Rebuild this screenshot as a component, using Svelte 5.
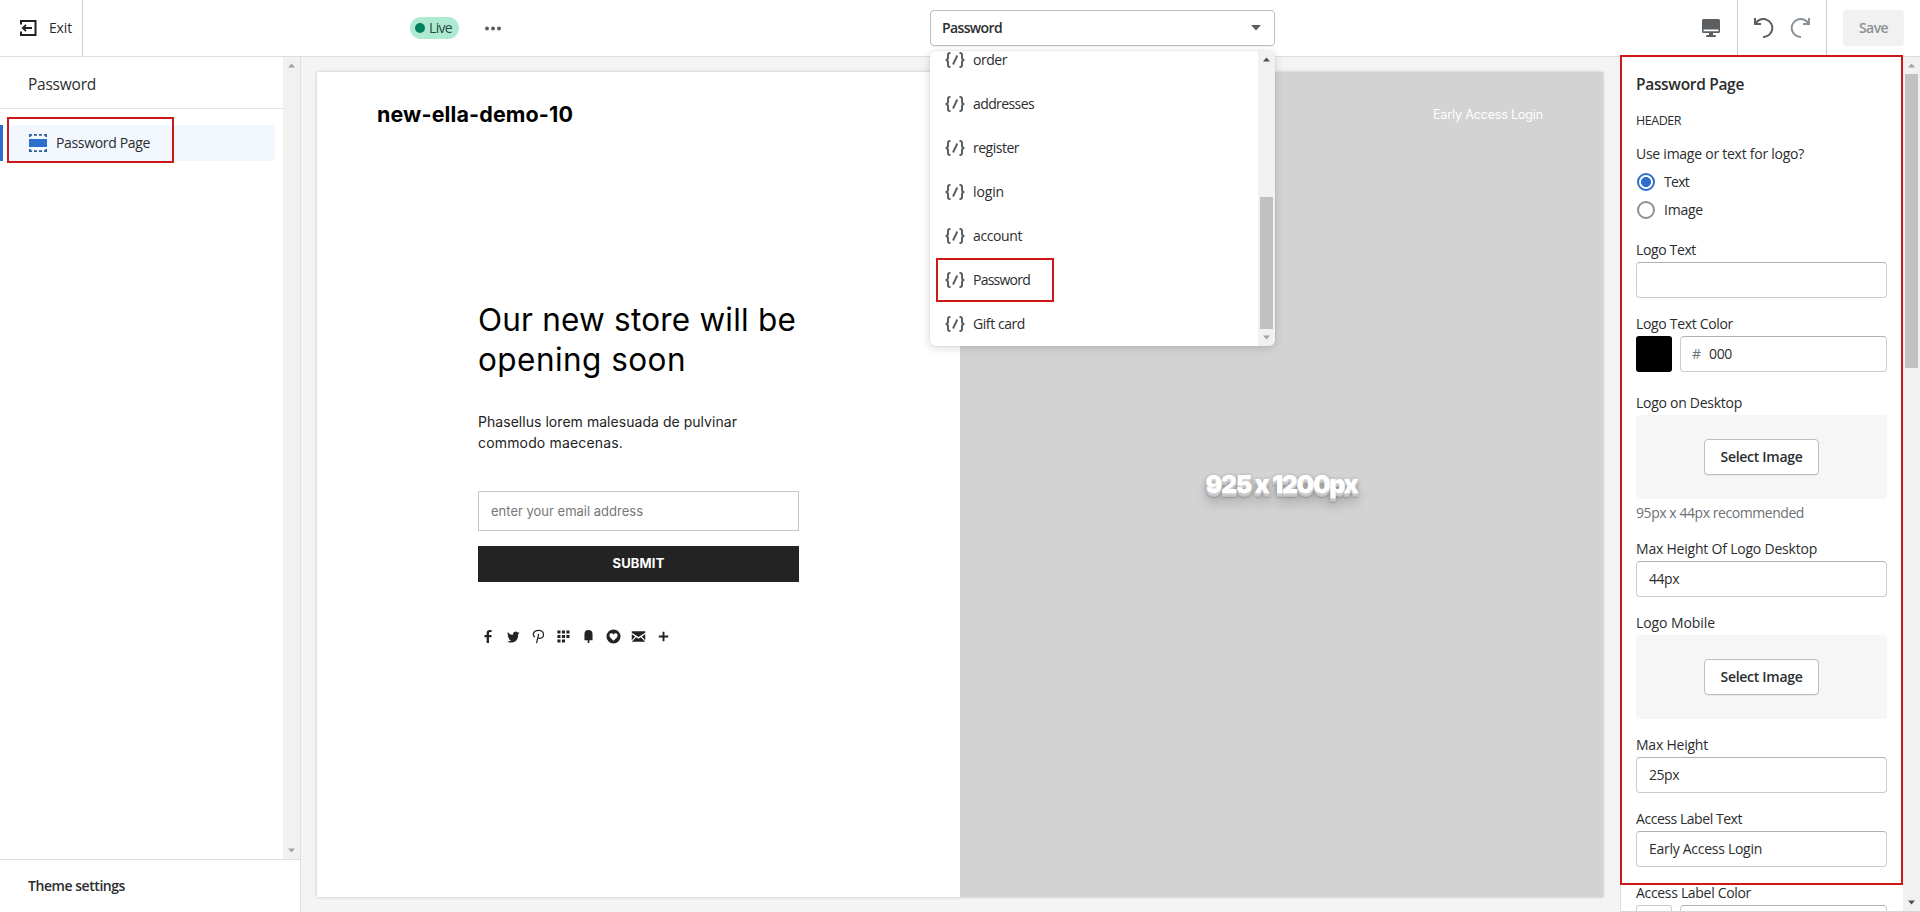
<script>
  const templates = ['order', 'addresses', 'register', 'login', 'account', 'Password', 'Gift card'];
  const widths = [34, 61, 46, 31, 49, 57, 52];

  // Tracks a line of text so that it spans the given width.
  function fit(node, width) {
    const natural = node.getBoundingClientRect().width;
    const count = node.textContent.length;
    node.style.letterSpacing = (width - natural) / count + 'px';
  }
</script>

{#snippet t(text, width)}<span class="t" use:fit={width}>{text}</span>{/snippet}

{#snippet arrow(up, color)}
  <svg class="arrow" width="17" height="17" viewBox="0 0 17 17"><path d={up ? 'M5 10.500h7L8.500 6.500z' : 'M5 6.500h7L8.500 10.500z'} fill={color} /></svg>
{/snippet}

<div class="app">
  <header class="top">
    <div class="exit">
      <svg width="17" height="16" viewBox="0 0 17 16" fill="none" stroke="#202223" stroke-width="2"><path d="M1 4.500V1h14.500v14H1v-3.500" /><path d="M12 8H3M6 4.800L2.800 8 6 11.200" stroke-width="1.800" /></svg>
      {@render t('Exit', 23)}
    </div>
    <div class="status">
      <div class="live"><i></i>{@render t('Live', 23)}</div>
      <svg width="16" height="5" viewBox="0 0 16 5" fill="#5c5f62"><circle cx="2" cy="2.500" r="2" /><circle cx="8" cy="2.500" r="2" /><circle cx="14" cy="2.500" r="2" /></svg>
    </div>
    <div class="picker">
      <div class="select">
        {@render t('Password', 60)}
        <svg width="10" height="6" viewBox="0 0 10 6"><path d="M0 0h10L5 5.500z" fill="#5c5f62" /></svg>
      </div>
      <div class="menu">
        <div class="options">
          {#each templates as name, i}
            <div class="option" class:marked={name === 'Password'}>
              <svg width="20" height="16" viewBox="0 0 20 16" fill="none" stroke="#5c5f62" stroke-width="2"><path d="M5.500 1H4.800Q3 1 3 3v2.500Q3 8 .6 8 3 8 3 10.500V13q0 2 1.800 2h.7M14.500 1h.7Q17 1 17 3v2.500Q17 8 19.400 8 17 8 17 10.500V13q0 2-1.800 2h-.7M12.300 3.500L8 12.500" /></svg>
              {@render t(name, widths[i])}
            </div>
          {/each}
        </div>
        <div class="bar">{@render arrow(true, '#505050')}<b></b>{@render arrow(false, '#a3a3a3')}</div>
      </div>
    </div>
    <div class="tools">
      <div class="device">
        <svg width="18" height="18" viewBox="0 0 18 18" fill="#5c5f62"><path fill-rule="evenodd" d="M1.500 0h15Q18 0 18 1.500v11q0 1.500-1.500 1.500h-15Q0 14 0 12.500v-11Q0 0 1.500 0zM1.500 10.500v1.700h15v-1.700z" /><path d="M7 14h4v2h2q1 0 1 2H4q0-2 1-2h2z" /></svg>
      </div>
      <div class="history">
        <svg width="20" height="20" viewBox="0 0 20 20" fill="none" stroke="#5c5f62" stroke-width="2"><path d="M1 0v6h6M1.500 5.500A9 9 0 1 1 9 19" /></svg>
        <svg width="20" height="20" viewBox="0 0 20 20" fill="none" stroke="#8c9196" stroke-width="2"><path d="M19 0v6h-6M18.500 5.500A9 9 0 1 0 11 19" /></svg>
      </div>
      <div class="save">{@render t('Save', 29)}</div>
    </div>
  </header>

  <div class="body">
    <aside class="left">
      <div class="tree">
        <div class="list">
          <h2>{@render t('Password', 68)}</h2>
          <div class="row">
            <div class="section">
              <svg width="18" height="18" viewBox="0 0 18 18"><path d="M0 5h18v8H0z" fill="#2c6ecb" /><path d="M0 0h3v1.700H1.700V3H0zM5 0h3v1.700H5zM10 0h3v1.700h-3zM15 0h3v3h-1.700V1.700H15zM0 15h1.700v1.300H3V18H0zM5 16.300h3V18H5zM10 16.300h3V18h-3zM16.300 15H18v3h-3v-1.700h1.300z" fill="#2f6096" /></svg>
              {@render t('Password Page', 94)}
            </div>
            <div class="mark"></div>
          </div>
        </div>
        <div class="bar">{@render arrow(true, '#a3a3a3')}{@render arrow(false, '#a3a3a3')}</div>
      </div>
      <footer>{@render t('Theme settings', 97)}</footer>
    </aside>

    <main>
      <div class="card">
        <div class="half white">
          <div class="brand">{@render t('new-ella-demo-10', 196)}</div>
          <div class="form">
            <h1>{@render t('Our new store will be', 318)}<br />{@render t('opening soon', 208)}</h1>
            <p>{@render t('Phasellus lorem malesuada de pulvinar', 259)}<br />{@render t('commodo maecenas.', 145)}</p>
            <div class="email">{@render t('enter your email address', 152)}</div>
            <div class="submit">{@render t('SUBMIT', 52)}</div>
            <div class="social">
              <svg viewBox="0 0 16 16"><path d="M6 15V8.700H3.700V6.400H6V4.500Q6 1 9.300 1h2v2.300H9.700Q8.500 3.300 8.500 4.600v1.800h2.700v2.300H8.500V15z" /></svg>
              <svg viewBox="0 0 16 16"><path d="M14.500 4l-1.500.5 1.100-1.600-1.800.7a3 3 0 0 0-5 2.700Q3.800 6.100 2 3.300 1 6 3 7.400L1.700 7q0 2.300 2.300 3l-1.200.1q.7 1.800 2.700 2-1.600 1.200-4 1.100Q6 15.800 9.700 13.300 13 11 13 5.500z" /></svg>
              <svg viewBox="0 0 16 16"><path d="M4 8.800C1 6 2.700 1.500 8 1.500c7 0 6.800 8.600 1.500 8.600-1.200 0-1.800-.5-2.300-1.200M8.200 5.300L5.900 15" fill="none" stroke="#232323" stroke-width="1.300" /></svg>
              <svg viewBox="0 0 16 16"><path d="M1.500 1.500h3.300v3.300H1.500zM6.300 1.500h3.300v3.300H6.300zM11.100 1.500h3.300v3.300h-3.300zM1.500 6.300h3.300v3.300H1.500zM6.300 6.300h3.300v3.300H6.300zM11.100 6.300h3.300v3.300h-3.300zM1.500 11.100h3.300v3.300H1.500zM6.300 11.100h3.300v3.300H6.300z" /></svg>
              <svg viewBox="0 0 16 16"><path d="M3.700 12V5.500Q3.700 1 8 1t4.300 4.500V12H8.900v3H7.100v-3z" /></svg>
              <svg viewBox="0 0 16 16"><path fill-rule="evenodd" d="M.5 8a7.500 7.500 0 0 0 15 0A7.500 7.500 0 0 0 .5 8zM8 12.600L4.200 8.800Q2.700 5.600 5.200 4.600 7.200 4.200 8 6 8.800 4.200 10.800 4.600 13.300 5.600 11.800 8.800z" /></svg>
              <svg viewBox="0 0 16 16"><path d="M.8 2.500h14.400v1.400L8 8.500.8 3.900zM.8 5.600L4.500 8 .8 12zM15.200 5.600V12L11.500 8zM5.500 8.700L8 10.300l2.500-1.600 4.700 4.800H.8z" /></svg>
              <svg viewBox="0 0 16 16"><path d="M7 3h2v4h4v2H9v4H7V9H3V7h4z" /></svg>
            </div>
          </div>
        </div>
        <div class="half grey">
          <div class="login">{@render t('Early Access Login', 110)}</div>
          <div class="size">{@render t('925 x 1200px', 154)}</div>
        </div>
      </div>
    </main>

    <aside class="right">
      <div class="settings">
        <h3>{@render t('Password Page', 108)}</h3>
        <h4>{@render t('HEADER', 45)}</h4>
        <div class="label">{@render t('Use image or text for logo?', 168)}</div>
        <div class="radios">
          <div class="radio"><i class="on"></i>{@render t('Text', 25)}</div>
          <div class="radio"><i></i>{@render t('Image', 39)}</div>
        </div>
        <div class="label">{@render t('Logo Text', 60)}</div>
        <div class="input"></div>
        <div class="label">{@render t('Logo Text Color', 97)}</div>
        <div class="color"><div class="swatch black"></div><div class="input hex"><em>#</em>{@render t('000', 23)}</div></div>
        <div class="label wide">{@render t('Logo on Desktop', 106)}</div>
        <div class="drop"><div class="btn">{@render t('Select Image', 82)}</div></div>
        <div class="help">{@render t('95px x 44px recommended', 168)}</div>
        <div class="label flush">{@render t('Max Height Of Logo Desktop', 181)}</div>
        <div class="input">{@render t('44px', 30)}</div>
        <div class="label">{@render t('Logo Mobile', 79)}</div>
        <div class="drop"><div class="btn">{@render t('Select Image', 82)}</div></div>
        <div class="label">{@render t('Max Height', 72)}</div>
        <div class="input">{@render t('25px', 30)}</div>
        <div class="label">{@render t('Access Label Text', 106)}</div>
        <div class="input">{@render t('Early Access Login', 113)}</div>
        <div class="label">{@render t('Access Label Color', 115)}</div>
        <div class="color"><div class="swatch"></div><div class="input hex"></div></div>
        <div class="mark"></div>
      </div>
      <div class="bar">{@render arrow(true, '#a3a3a3')}<b></b>{@render arrow(false, '#505050')}</div>
    </aside>
  </div>
</div>

<style>
  :global(body) { margin: 0; overflow: hidden; }
  .app { width: 1920px; height: 912px; display: flex; flex-direction: column; overflow: hidden; background: #f4f4f4; color: #2b2d2e; font: 14px/20px "Open Sans", "Noto Sans", sans-serif; }
  .app :global(*) { box-sizing: border-box; }
  .t { display: inline-block; white-space: pre; }
  svg { display: block; flex: none; }
  h1, h2, h3, h4, p { margin: 0; font-weight: 400; }

  .top { flex: none; height: 57px; display: flex; background: #fff; border-bottom: 1px solid #dcdddf; position: relative; z-index: 2; }
  .exit { width: 83px; border-right: 1px solid #c9cccf; display: flex; align-items: center; gap: 12px; padding-left: 20px; font-weight: 500; }
  .status { width: 847px; display: flex; align-items: center; padding-left: 327px; gap: 26px; }
  .live { width: 49px; height: 22px; border-radius: 11px; background: #aee9d1; display: flex; align-items: center; padding-left: 5px; gap: 4px; color: #2c4b3f; }
  .live i { width: 10px; height: 10px; border-radius: 50%; background: #007f5f; }
  .picker { position: relative; width: 345px; padding-top: 10px; }
  .select { height: 36px; border: 1px solid #babfc3; border-radius: 4px; display: flex; align-items: center; justify-content: space-between; padding: 0 13px 0 11px; font-weight: 600; box-shadow: 0 1px 0 rgba(0,0,0,.05); }
  .menu { position: absolute; left: 0; top: 51px; width: 345px; height: 295px; display: flex; background: #fff; border-radius: 6px; overflow: hidden; }
  .picker::after { content: ""; position: absolute; left: 0; top: 51px; width: 345px; height: 295px; border-radius: 6px; box-shadow: 0 2px 10px rgba(23,24,24,.16), 0 0 2px rgba(0,0,0,.12); pointer-events: none; }
  .options { flex: 1; height: 308px; margin-top: -13px; padding: 0 6px; }
  .option { height: 44px; display: flex; align-items: center; gap: 8px; padding-left: 9px; }
  .option.marked { width: 118px; outline: 2px solid #cc1818; outline-offset: -2px; }
  .bar { flex: none; width: 17px; background: #f1f1f1; display: flex; flex-direction: column; align-items: center; justify-content: space-between; }
  .menu .bar b { width: 13px; height: 132px; margin-top: 129px; background: #c1c1c1; }
  .menu .bar { justify-content: flex-start; }
  .tools { margin-left: auto; display: flex; align-items: stretch; }
  .device { width: 36px; display: flex; align-items: center; border-right: 1px solid #c9cccf; }
  .history { width: 89px; display: flex; align-items: center; gap: 16px; padding-left: 16px; border-right: 1px solid #c9cccf; }
  .save { margin: 10px 16px 0; width: 61px; height: 36px; border-radius: 4px; background: #f1f1f1; color: #8c9196; font-weight: 600; display: flex; align-items: center; justify-content: center; }

  .body { flex: 1; min-height: 0; display: flex; }
  .left { width: 301px; background: #fff; border-right: 1px solid #dfe0e2; display: flex; flex-direction: column; }
  .tree { flex: none; height: 802px; display: flex; }
  .list { flex: 1; }
  .list h2 { height: 52px; border-bottom: 1px solid #e1e3e5; padding: 0 28px; line-height: 55px; font-size: 15.500px; font-weight: 500; }
  .row { position: relative; height: 36px; margin-top: 16px; border-left: 3px solid #2c6ecb; padding: 0 8px 0 6px; border-radius: 0 2px 2px 0; }
  .section { height: 36px; border-radius: 4px; background: #f2f7fe; display: flex; align-items: center; gap: 9px; padding-left: 20px; font-weight: 500; }
  .mark { position: absolute; border: 2px solid #cc1818; pointer-events: none; }
  .row .mark { left: 4px; top: -8px; width: 167px; height: 46px; }
  .left footer { flex: none; height: 53px; border-top: 1px solid #dfe0e2; padding: 16px 28px; font-weight: 600; }

  main { width: 1319px; padding: 15px 16px; }
  .card { width: 1286px; height: 825px; display: flex; background: #fff; box-shadow: 0 0 3px rgba(0,0,0,.22); font-family: Inter, sans-serif; color: #000; }
  .white { width: 643px; }
  .brand { height: 84px; padding-left: 60px; line-height: 84px; font-size: 21.500px; font-weight: 700; }
  .form { width: 483px; padding: 144px 0 0 161px; }
  h1 { font-size: 31.500px; line-height: 40px; white-space: nowrap; }
  p { margin-top: 31px; line-height: 21px; font-size: 14px; white-space: nowrap; color: #232323; }
  .email { margin-top: 38px; width: 321px; height: 40px; border: 1px solid #c7c7c7; padding: 0 12px; line-height: 39px; font-size: 13px; color: #777; }
  .submit { margin-top: 15px; width: 321px; height: 36px; background: #232323; color: #fff; font-size: 13px; font-weight: 700; line-height: 35px; text-align: center; }
  .social { margin-top: 47px; padding-left: 3px; display: flex; gap: 10px; }
  .social svg { width: 15px; height: 15px; fill: #232323; }
  .grey { width: 643px; background: #d3d3d3; color: #fff; text-align: right; }
  .login { height: 84px; padding-right: 60px; line-height: 86px; font-size: 12.500px; }
  .size { text-align: center; padding-top: 313px; line-height: 30px; font-size: 25px; font-weight: 900; text-shadow: 0 1px 0 #d8d8d8, 0 2px 0 #ccc, 0 3px 0 #c6c6c6, 0 4px 0 #bbb, 0 5px 1px rgba(0,0,0,.1), 0 0 5px rgba(0,0,0,.1), 0 3px 5px rgba(0,0,0,.25), 0 10px 12px rgba(0,0,0,.22); }

  .right { position: relative; z-index: 3; width: 300px; display: flex; background: #fff; border-left: 1px solid #dfe0e2; border-bottom: 1px solid #d5d6d8; }
  .settings { position: relative; width: 282px; padding: 15px 16px 0 15px; height: 854px; clip-path: inset(-2px 0 0 -1px); }
  .settings .mark { left: -1px; top: -2px; width: 283px; height: 830px; }
  h3 { line-height: 24px; font-size: 15.500px; font-weight: 600; }
  h4 { margin-top: 15px; line-height: 20px; font-size: 12.500px; font-weight: 500; }
  .label { margin-top: 14px; line-height: 24px; height: 24px; white-space: nowrap; }
  h4 + .label { margin-top: 11px; }
  .label.wide { margin-top: 19px; }
  .label.flush { margin-top: 9px; }
  .radios { padding-top: 2px; }
  .radio { height: 28px; display: flex; align-items: center; gap: 9px; padding-left: 1px; }
  .radio i { width: 18px; height: 18px; border: 2px solid #8c9196; border-radius: 50%; }
  .radio i.on { border-color: #2c6ecb; background: radial-gradient(circle, #2c6ecb 4.700px, #fff 5.300px); }
  .input { height: 36px; width: 251px; border: 1px solid #c9cccf; border-top-color: #aeb4b9; border-radius: 4px; line-height: 34px; padding-left: 12px; }
  .color { height: 36px; display: flex; gap: 8px; }
  .swatch { width: 36px; height: 36px; border-radius: 3px; border: 1px solid #c9cccf; }
  .black { background: #000; border: 0; }
  .hex { width: 207px; display: flex; padding-left: 11px; }
  .hex em { font-style: normal; color: #6d7175; width: 17px; }
  .drop { width: 251px; height: 84px; border-radius: 4px; background: #f6f6f7; display: flex; align-items: center; justify-content: center; }
  .btn { width: 115px; height: 36px; border: 1px solid #babfc3; border-radius: 4px; background: #fff; text-align: center; line-height: 34px; font-weight: 600; box-shadow: 0 1px 0 rgba(0,0,0,.05); }
  .help { height: 29px; line-height: 28px; color: #6d7175; white-space: nowrap; }
  .right .bar { justify-content: flex-start; }
  .right .bar b { width: 13px; height: 294px; background: #c1c1c1; margin-bottom: auto; }
</style>
